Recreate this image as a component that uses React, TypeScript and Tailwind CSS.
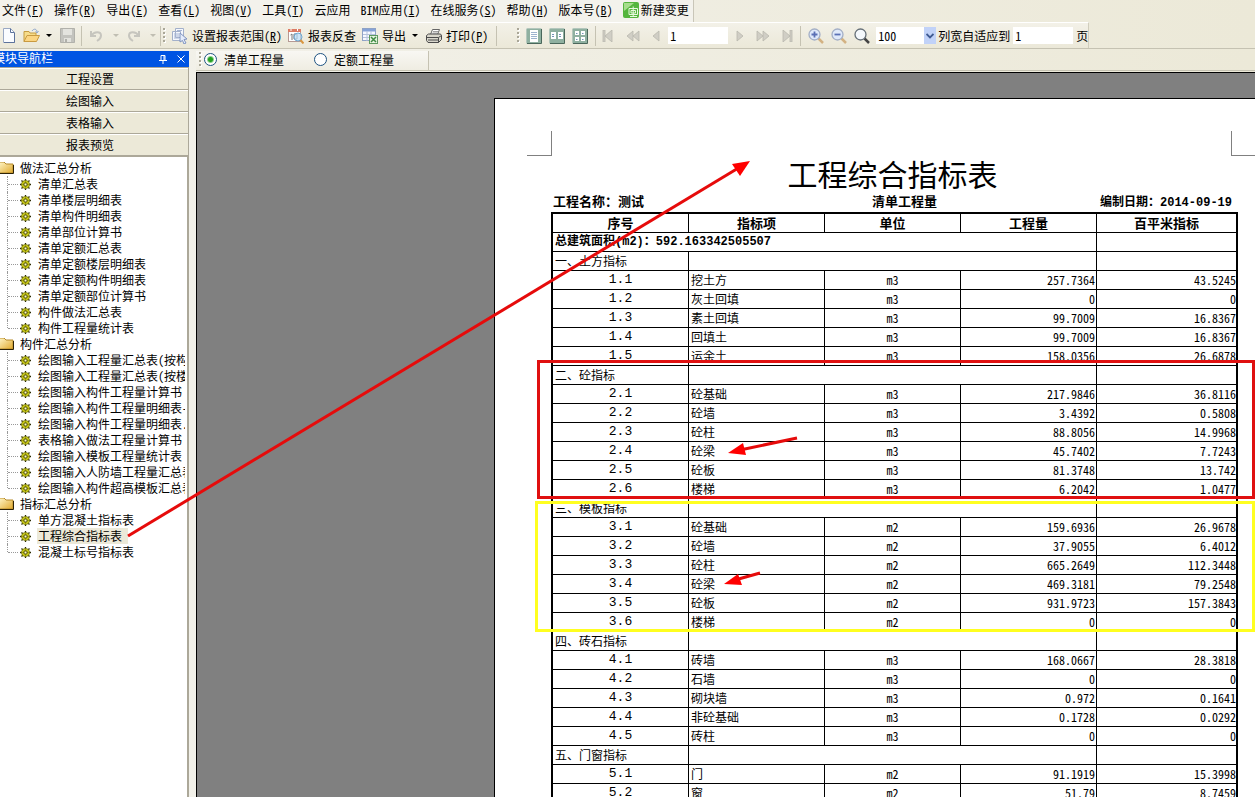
import type { ReactNode } from "react";

const menus = [
  ["文件", "F"],
  ["操作", "R"],
  ["导出", "E"],
  ["查看", "L"],
  ["视图", "V"],
  ["工具", "T"],
  ["云应用", ""],
  ["BIM应用", "I"],
  ["在线服务", "S"],
  ["帮助", "H"],
  ["版本号", "B"],
];

const tree = [
  {
    name: "做法汇总分析",
    items: [
      "清单汇总表",
      "清单楼层明细表",
      "清单构件明细表",
      "清单部位计算书",
      "清单定额汇总表",
      "清单定额楼层明细表",
      "清单定额构件明细表",
      "清单定额部位计算书",
      "构件做法汇总表",
      "构件工程量统计表",
    ],
  },
  {
    name: "构件汇总分析",
    items: [
      "绘图输入工程量汇总表(按构",
      "绘图输入工程量汇总表(按楼",
      "绘图输入构件工程量计算书",
      "绘图输入构件工程量明细表-",
      "绘图输入构件工程量明细表.",
      "表格输入做法工程量计算书",
      "绘图输入模板工程量统计表",
      "绘图输入人防墙工程量汇总表",
      "绘图输入构件超高模板汇总表",
    ],
  },
  {
    name: "指标汇总分析",
    items: ["单方混凝土指标表", "工程综合指标表", "混凝土标号指标表"],
  },
];

const sections = [
  {
    title: "一、土方指标",
    rows: [
      ["1.1", "挖土方", "m3", "257.7364", "43.5245"],
      ["1.2", "灰土回填", "m3", "0", "0"],
      ["1.3", "素土回填", "m3", "99.7009", "16.8367"],
      ["1.4", "回填土", "m3", "99.7009", "16.8367"],
      ["1.5", "运余土", "m3", "158.0356", "26.6878"],
    ],
  },
  {
    title: "二、砼指标",
    rows: [
      ["2.1", "砼基础", "m3", "217.9846", "36.8116"],
      ["2.2", "砼墙", "m3", "3.4392", "0.5808"],
      ["2.3", "砼柱", "m3", "88.8056", "14.9968"],
      ["2.4", "砼梁", "m3", "45.7402", "7.7243"],
      ["2.5", "砼板", "m3", "81.3748", "13.742"],
      ["2.6", "楼梯", "m3", "6.2042", "1.0477"],
    ],
  },
  {
    title: "三、模板指标",
    rows: [
      ["3.1", "砼基础", "m2", "159.6936", "26.9678"],
      ["3.2", "砼墙", "m2", "37.9055", "6.4012"],
      ["3.3", "砼柱", "m2", "665.2649", "112.3448"],
      ["3.4", "砼梁", "m2", "469.3181", "79.2548"],
      ["3.5", "砼板", "m2", "931.9723", "157.3843"],
      ["3.6", "楼梯", "m2", "0", "0"],
    ],
  },
  {
    title: "四、砖石指标",
    rows: [
      ["4.1", "砖墙", "m3", "168.0667", "28.3818"],
      ["4.2", "石墙", "m3", "0", "0"],
      ["4.3", "砌块墙", "m3", "0.972", "0.1641"],
      ["4.4", "非砼基础", "m3", "0.1728", "0.0292"],
      ["4.5", "砖柱", "m3", "0", "0"],
    ],
  },
  {
    title: "五、门窗指标",
    rows: [
      ["5.1", "门", "m2", "91.1919", "15.3998"],
      ["5.2", "窗", "m2", "51.79", "8.7459"],
    ],
  },
];

function Label({ text, hotkey }: { text: string; hotkey?: string }) {
  return (
    <span className="whitespace-nowrap">
      {text}
      {hotkey && (
        <>
          (<u>{hotkey}</u>)
        </>
      )}
    </span>
  );
}

function IconButton({ label, className, children }: { label: string; className?: string; children: ReactNode }) {
  return (
    <button aria-label={label} className={className ?? "shrink-0"}>
      {children}
    </button>
  );
}

function Grip() {
  return (
    <svg width="3" height="18" className="shrink-0">
      {[1, 5, 9, 13].map((y) => (
        <g key={y}>
          <rect x="1" y={y + 1} width="2" height="2" fill="#fff" />
          <rect x="0" y={y} width="2" height="2" fill="#aaa798" />
        </g>
      ))}
    </svg>
  );
}

function Separator() {
  return <div className="h-5 w-px shrink-0 bg-[#c5c2b2]" />;
}

function Caret({ color = "#000" }: { color?: string }) {
  return (
    <svg width="6" height="3" viewBox="0 0 6 3" className="shrink-0">
      <path d="M0 0h6L3 3z" fill={color} />
    </svg>
  );
}

function Gear() {
  return (
    <svg width="11" height="11" viewBox="0 0 11 11" className="shrink-0">
      <path d="M5.500 0v11M0 5.500h11M1.500 1.500l8 8M9.500 1.500l-8 8" stroke="#2a2a00" strokeWidth="1.300" />
      <circle cx="5.500" cy="5.500" r="4" fill="#f2f21c" stroke="#55550a" strokeWidth="0.800" />
      <path d="M5.500 1.500v8M1.500 5.500h8" stroke="#8a8a10" strokeWidth="0.800" />
      <rect x="4" y="4" width="3" height="3" fill="#ffffc0" stroke="#444400" strokeWidth="0.900" />
    </svg>
  );
}

function Folder() {
  return (
    <svg width="15" height="12" viewBox="0 0 15 12" className="shrink-0">
      <defs>
        <linearGradient id="folder" x1="0" y1="0" x2="1" y2="1">
          <stop offset="0" stopColor="#fff6c8" />
          <stop offset="1" stopColor="#e0a92c" />
        </linearGradient>
      </defs>
      <path d="M0 0h5l2 2h7v9H0z" fill="url(#folder)" stroke="#b58a2b" />
      <path d="M0 11.500h14.500V3" fill="none" stroke="#2d2206" />
    </svg>
  );
}

function Nav({ d, width }: { d: string; width: number }) {
  return (
    <svg width={width} height="12" viewBox={`0 0 ${width} 12`}>
      <path d={d} fill="#d0cec5" stroke="#b9b7ad" strokeWidth="0.800" />
    </svg>
  );
}

function Lens({ sign, dark }: { sign?: string; dark?: boolean }) {
  return (
    <svg width="16" height="16" viewBox="0 0 16 16">
      <path d="M10 10l5 5" stroke={dark ? "#444" : "#d3b283"} strokeWidth="2.500" />
      <circle cx="6.500" cy="6.500" r="5.500" fill={dark ? "#f4f8fc" : "#dfe9fa"} stroke={dark ? "#667078" : "#a3afc6"} strokeWidth="1.300" />
      {sign && <path d={sign} stroke="#5a70b5" strokeWidth="1.800" />}
    </svg>
  );
}

function PageView({ children }: { children: ReactNode }) {
  return (
    <svg width="16" height="16" viewBox="0 0 16 16">
      <rect x="0.500" y="0.500" width="15" height="15" rx="1" fill="#8fb0a0" stroke="#b3c6bc" />
      <path d="M1 15.500h14.500V1" fill="none" stroke="#4a675b" />
      {children}
    </svg>
  );
}

function MenuBar() {
  return (
    <div className="flex h-[22px]">
      <nav className="flex items-center gap-2.5 border-r border-[#c9c6b8] bg-[#f3f2ec] pr-1 pb-0.5 pl-0.5">
        {menus.map(([text, key]) => (
          <button key={text}>
            <Label text={text} hotkey={key} />
          </button>
        ))}
        <button className="flex items-center gap-0.5">
          <svg width="16" height="16" viewBox="0 0 16 16">
            <rect width="16" height="16" rx="2" fill="#55b53d" />
            <path d="M1 1h10L1 9z" fill="#a7dd8c" />
            <path d="M6 6.500h8.500v6H6zM10.200 4.500v9.500M8 8.500h4.500v2.500H8zM7 14.500h7" fill="none" stroke="#e9f8df" strokeWidth="1" />
          </svg>
          新建变更
        </button>
      </nav>
    </div>
  );
}

function ToolBar() {
  return (
    <div className="flex h-[27px] border-b border-[#c5c2b2]">
      <div className="flex items-center border-t border-r border-t-white border-r-[#d0cdbd] bg-linear-to-b from-[#f3f1e8] to-[#ebe8d8] pl-[3px]">
        <IconButton label="新建">
          <svg width="12" height="15" viewBox="0 0 12 15">
            <path d="M0.500 0.500h7l4 4v10h-11z" fill="#fafcff" stroke="#9aa9c4" />
            <path d="M7.500 0.500v4h4M1 14.500h10.500V5" fill="none" stroke="#5c729b" />
          </svg>
        </IconButton>
        <IconButton label="打开" className="ml-2 flex items-center gap-1.5">
          <svg width="17" height="15" viewBox="0 0 17 15">
            <path d="M1 13.500v-10h5l1 1.500h6v3" fill="#f6dc8a" stroke="#c59b40" />
            <path d="M1 13.500l3-6h12.500l-3 6z" fill="#fbd582" stroke="#c99a41" />
            <path d="M9 3c2-3 5-2 5 1M12.500 3.500L14 5l1.500-2" fill="none" stroke="#8ea6cc" />
          </svg>
          <Caret />
        </IconButton>
        <IconButton label="保存" className="ml-2 shrink-0">
          <svg width="15" height="15" viewBox="0 0 15 15">
            <path d="M0.500 0.500h14v14h-14z" fill="#c3c3be" stroke="#b1b1ab" />
            <path d="M3 1h9v6H3zM4 10h7v4H4z" fill="#e3e3de" />
            <path d="M5 11h2v3H5z" fill="#b0b0aa" />
          </svg>
        </IconButton>
        <div className="ml-1.5 flex items-center gap-2">
          <Separator />
          <IconButton label="撤销" className="flex items-center gap-2.5">
            <svg width="13" height="12" viewBox="0 0 13 12">
              <path d="M1 1v5h5M1.500 5.500C4 1 11 1 11 5.500c0 2-1.500 4-4 5.500" fill="none" stroke="#c6c5be" strokeWidth="2" />
            </svg>
            <Caret color="#c0beb2" />
          </IconButton>
          <IconButton label="重做" className="flex items-center gap-2.5">
            <svg width="13" height="12" viewBox="0 0 13 12">
              <path d="M12 1v5H7M11.500 5.500C9 1 2 1 2 5.500c0 2 1.500 4 4 5.500" fill="none" stroke="#c6c5be" strokeWidth="2" />
            </svg>
            <Caret color="#c0beb2" />
          </IconButton>
        </div>
        <div className="ml-1 flex items-center gap-1.5">
          <div className="flex items-center gap-0.5">
            <Separator />
            <Grip />
          </div>
          <button className="flex items-center gap-1">
            <svg width="16" height="16" viewBox="0 0 16 16">
              <path d="M3.500 0.500h8v9h-8zM0.500 3.500h8v9h-8z" fill="#f4f7fd" stroke="#a3b0ca" />
              <path d="M2 6h5M2 8h5M2 10h5M5 2.500h5" stroke="#a6b5d4" />
              <path d="M8 5l7 6-3 .5 2 3.500-2 1-1.500-3.500L8 14z" fill="#e5ecfb" stroke="#7f93c0" />
            </svg>
            <Label text="设置报表范围" hotkey="R" />
          </button>
          <button className="flex items-center gap-1">
            <svg width="16" height="16" viewBox="0 0 16 16">
              <rect x="0.500" y="1.500" width="12" height="12" fill="#fff" stroke="#b59a94" />
              <path d="M0 1h13v3H0z" fill="#dd7c64" />
              <path d="M3 1v2M9.500 1v2" stroke="#fff" />
              <path d="M2.500 7l1.500-1v6M6 6v5h3V6z" fill="none" stroke="#777" />
              <circle cx="10" cy="9" r="4" fill="#b8dcf5" fillOpacity="0.700" stroke="#6fa8d0" />
              <path d="M12.500 12l3 3.500" stroke="#d9963f" strokeWidth="2" />
            </svg>
            <Label text="报表反查" />
          </button>
          <button className="flex items-center gap-1">
            <svg width="16" height="16" viewBox="0 0 16 16">
              <rect x="0.500" y="0.500" width="13" height="12" fill="#f5f8ff" stroke="#8fa3c6" />
              <path d="M1 1h12v2.500H1z" fill="#86a3d8" />
              <path d="M1 6.500h12M1 9.500h12M5 3v10M9 3v10" stroke="#b4c2db" />
              <rect x="7.500" y="7.500" width="8" height="8" fill="#e6f3df" stroke="#5f9a5f" />
              <path d="M9 9l5 5M14 9l-5 5" stroke="#3f8c42" strokeWidth="1.500" />
            </svg>
            <span className="flex items-center gap-1.5 whitespace-nowrap">
              导出 <Caret />
            </span>
          </button>
          <button className="ml-0.5 flex items-center gap-1">
            <svg width="16" height="14" viewBox="0 0 16 14">
              <path d="M4.500 5.500l2-5h7l-2 5" fill="#fff" stroke="#666" />
              <path d="M7 2.500h5M6.500 4h5" stroke="#888" strokeWidth="0.800" />
              <path d="M0.500 6.500l2-1.500h12l1 1.500v4l-3 3H2l-1.500-2z" fill="#d9d7cc" stroke="#4b4b4b" />
              <path d="M1 8.500h11.500l3-2M2 11h10M12.500 8.500v5" fill="none" stroke="#4b4b4b" />
            </svg>
            <Label text="打印" hotkey="P" />
          </button>
        </div>
        <div className="ml-2 flex items-center gap-5">
          <Separator />
          <Grip />
        </div>
        <div className="ml-1.5 flex items-center gap-[7px]">
          <IconButton label="单页">
            <PageView>
              <path d="M4 2h8v12H4z" fill="#fff" />
              <path d="M5 4.500h6M5 6.500h6M5 8.500h6M5 10.500h6" stroke="#9db3cf" />
            </PageView>
          </IconButton>
          <IconButton label="双页">
            <PageView>
              <path d="M2 4h5v7H2zM9 4h5v7H9z" fill="#fff" />
              <path d="M3 6.500h2M3 8.500h2M10 6.500h2M10 8.500h2" stroke="#7694b8" />
            </PageView>
          </IconButton>
          <IconButton label="多页">
            <PageView>
              <path d="M3 3h4v4H3zM9 3h4v4H9zM3 9h4v4H3zM9 9h4v4H9z" fill="#fff" />
              <path d="M4 5.500h1.500M10 5.500h1.500M4 11.500h1.500M10 11.500h1.500" stroke="#7694b8" />
            </PageView>
          </IconButton>
          <Separator />
        </div>
        <div className="ml-1.5 flex items-center gap-3">
          <IconButton label="首页">
            <Nav width={12} d="M1 0h2v12H1zM10 0v12L3 6z" />
          </IconButton>
          <IconButton label="快退">
            <Nav width={14} d="M7 1v10L1 6zM13 1v10L7 6z" />
          </IconButton>
          <IconButton label="上一页">
            <Nav width={8} d="M7 1v10L1 6z" />
          </IconButton>
        </div>
        <input aria-label="页码" defaultValue="1" className="ml-2 h-[17px] w-[60px] bg-white px-0.5 outline-none" />
        <div className="ml-2 flex items-center gap-3">
          <IconButton label="下一页">
            <Nav width={8} d="M1 1v10l6-5z" />
          </IconButton>
          <IconButton label="快进">
            <Nav width={14} d="M1 1v10l6-5zM7 1v10l6-5z" />
          </IconButton>
          <IconButton label="末页">
            <Nav width={12} d="M1 0v12l7-6zM8 0h2v12H8z" />
          </IconButton>
        </div>
        <div className="ml-1.5 flex items-center gap-[7px]">
          <Separator />
          <IconButton label="放大">
            <Lens sign="M3.500 6.500h6M6.500 3.500v6" />
          </IconButton>
          <IconButton label="缩小">
            <Lens sign="M3.500 6.500h6" />
          </IconButton>
          <IconButton label="缩放">
            <Lens dark />
          </IconButton>
        </div>
        <div className="relative ml-1.5">
          <select aria-label="显示比例" className="block h-[17px] w-[60px] appearance-none bg-white px-0.5 outline-none">
            <option>100</option>
          </select>
          <span className="pointer-events-none absolute inset-y-0 right-0 flex w-3 items-center justify-center bg-[#c1d2f8]">
            <svg width="8" height="6" viewBox="0 0 8 6">
              <path d="M0.500 1L4 4.500 7.500 1" fill="none" stroke="#3f5a91" strokeWidth="1.800" />
            </svg>
          </span>
        </div>
        <label className="flex items-center gap-[3px] pl-0.5 whitespace-nowrap">
          列宽自适应到
          <input defaultValue="1" className="h-[17px] w-[60px] bg-white px-0.5 outline-none" />
          页
        </label>
      </div>
    </div>
  );
}

function Sidebar() {
  return (
    <aside className="flex w-[189px] shrink-0 flex-col overflow-hidden">
      <div className="mt-0.5 flex h-4 shrink-0 items-center justify-between bg-[#0054e3] pr-1 text-white">
        <span className="-ml-[7px] pb-0.5">模块导航栏</span>
        <div className="flex items-center gap-2.5">
          <IconButton label="固定">
            <svg width="8" height="9" viewBox="0 0 8 9">
              <path d="M2 0.500h4v5H2zM5 0v6M0 5.500h8M4 6v3" fill="none" stroke="#fff" />
            </svg>
          </IconButton>
          <IconButton label="关闭">
            <svg width="8" height="8" viewBox="0 0 8 8">
              <path d="M0.500 0.500l7 7M7.500 0.500l-7 7" stroke="#fff" />
            </svg>
          </IconButton>
        </div>
      </div>
      <div className="shrink-0 border-t border-r border-[#aca899] text-center">
        {["工程设置", "绘图输入", "表格输入", "报表预览"].map((name) => (
          <button key={name} className="block h-[22px] w-full border-t border-b border-t-white border-b-[#aca899] bg-[#ece9d8] pr-2">
            {name}
          </button>
        ))}
      </div>
      <div className="min-h-0 flex-1 overflow-hidden border-t border-r-2 border-[#aca899] bg-white pt-[3px] pr-0.5">
        {tree.map((group) => (
          <div key={group.name}>
            <div className="flex h-4 items-center gap-1.5">
              <span className="-ml-px flex">
                <Folder />
              </span>
              {group.name}
            </div>
            <ul className="pl-[7px]">
              {group.items.map((item, i) => (
                <li key={item} className="flex h-4 items-center overflow-hidden">
                  <span
                    className={
                      i === group.items.length - 1
                        ? "h-2 shrink-0 self-start border-l border-dotted border-[#999]"
                        : "h-4 shrink-0 border-l border-dotted border-[#999]"
                    }
                  />
                  <span className="mr-0.5 w-2.5 shrink-0 border-t border-dotted border-[#999]" />
                  <Gear />
                  <button
                    className={
                      item === "工程综合指标表"
                        ? "ml-1.5 bg-[#ece9d8] pr-1.5 pl-px leading-4 whitespace-nowrap"
                        : "ml-1.5 pl-px leading-4 whitespace-nowrap"
                    }
                  >
                    {item}
                  </button>
                </li>
              ))}
            </ul>
          </div>
        ))}
      </div>
    </aside>
  );
}

function Report() {
  const cell = "h-[19px] overflow-hidden border-b border-r border-black whitespace-nowrap";
  const last = "h-[19px] overflow-hidden border-b border-black whitespace-nowrap";

  return (
    <div className="w-[802px] shrink-0 border border-black bg-white pb-14">
      <div className="flex justify-between px-8 pt-8">
        <div className="h-[25px] w-[25px] border-r border-b border-[#808080]" />
        <div className="h-[25px] w-8 border-b border-l border-[#808080]" />
      </div>
      <div className="mx-14 w-[687px]">
        <h1 className="h-[38px] pr-1 text-center text-[30px] leading-[34px]">工程综合指标表</h1>
        <div className="grid h-[18px] grid-cols-[1fr_auto_1fr] items-center pr-1.5 pl-0.5 font-['Liberation_Mono','Noto_Sans_CJK_SC',monospace] font-bold">
          <span className="text-[13px]">工程名称：测试</span>
          <span className="pl-6 text-[13px]">清单工程量</span>
          <span className="text-right">编制日期：2014-09-19</span>
        </div>
        <table className="w-full table-fixed border-separate border-spacing-0 border-2 border-black leading-[18px]">
          <colgroup>
            <col className="w-[136px]" />
            <col className="w-[136px]" />
            <col className="w-[136px]" />
            <col className="w-[136px]" />
            <col />
          </colgroup>
          <thead className="text-[13px]">
            <tr>
              <th className={cell}>序号</th>
              <th className={cell}>指标项</th>
              <th className={cell}>单位</th>
              <th className={cell}>工程量</th>
              <th className={last}>百平米指标</th>
            </tr>
          </thead>
          <tbody>
            <tr>
              <td colSpan={4} className="h-[19px] border-r border-b border-black pl-0.5 font-['Liberation_Mono','Noto_Sans_CJK_SC',monospace] font-bold">
                总建筑面积(m2)：592.163342505507
              </td>
              <td className={last} />
            </tr>
            {sections.map((section) => (
              <SectionRows key={section.title} title={section.title} rows={section.rows} cell={cell} last={last} />
            ))}
          </tbody>
        </table>
      </div>
    </div>
  );
}

function SectionRows({ title, rows, cell, last }: { title: string; rows: string[][]; cell: string; last: string }) {
  return (
    <>
      <tr>
        <td className={`${cell} pl-0.5`}>{title}</td>
        <td colSpan={3} className={cell} />
        <td className={last} />
      </tr>
      {rows.map(([no, name, unit, amount, index]) => (
        <tr key={no}>
          <td className={`${cell} text-center font-['Liberation_Mono',monospace] text-[13px]`}>{no}</td>
          <td className={`${cell} pl-0.5`}>{name}</td>
          <td className={`${cell} text-center`}>{unit}</td>
          <td className={`${cell} pr-px text-right`}>{amount}</td>
          <td className={`${last} text-right`}>{index}</td>
        </tr>
      ))}
    </>
  );
}

// Hand-drawn marks laid over the whole window
function Annotations() {
  return (
    <svg className="pointer-events-none absolute inset-0 h-full w-full">
      <g fill="none" strokeWidth="3">
        <rect x="538.500" y="361.500" width="715" height="136" stroke="#e01010" />
        <rect x="536.500" y="502.500" width="717" height="128" stroke="#ffff20" />
      </g>
      <g stroke="#e60b0b" strokeWidth="3">
        <path d="M128 536L740 167" />
        <path d="M797 438L740 450" />
        <path d="M760 573L735 580" />
      </g>
      <g fill="#ff0000">
        <path d="M750 161l-18 3 8 12z" />
        <path d="M728 453l15-10 3 12z" />
        <path d="M724 584l14-10 4 11z" />
      </g>
    </svg>
  );
}

export default function App() {
  return (
    <div className="relative flex h-screen flex-col overflow-hidden bg-linear-to-r from-[#f3f2ec] to-[#ece9d8] font-['Noto_Sans_CJK_SC',sans-serif] text-[12px] leading-4 text-black [font-feature-settings:'hwid']">
      <MenuBar />
      <ToolBar />
      <div className="flex min-h-0 flex-1">
        <Sidebar />
        <main className="ml-[7px] flex min-w-0 flex-1 flex-col">
          <div className="mt-0.5 flex h-5 shrink-0 border-b border-[#c5c2b2]">
            <div className="flex w-[233px] items-center border-r border-[#c5c2b2] bg-linear-to-b from-[#f8f7f3] to-[#efede2] pb-0.5 pl-[3px]">
              <Grip />
              {["清单工程量", "定额工程量"].map((name, i) => (
                <label key={name} className="mr-7 flex items-center gap-[7px]">
                  <input
                    type="radio"
                    name="kind"
                    defaultChecked={i === 0}
                    className="ml-0.5 size-[13px] appearance-none rounded-full border border-[#1d5281] bg-white checked:bg-[radial-gradient(circle,#21a121_0_2px,#ffffff_4px)]"
                  />
                  {name}
                </label>
              ))}
            </div>
          </div>
          <div className="mt-px flex min-h-0 flex-1 items-start overflow-hidden border-t border-l border-black bg-[#808080] pt-[25px] pl-[297px]">
            <Report />
          </div>
        </main>
      </div>
      <Annotations />
    </div>
  );
}
